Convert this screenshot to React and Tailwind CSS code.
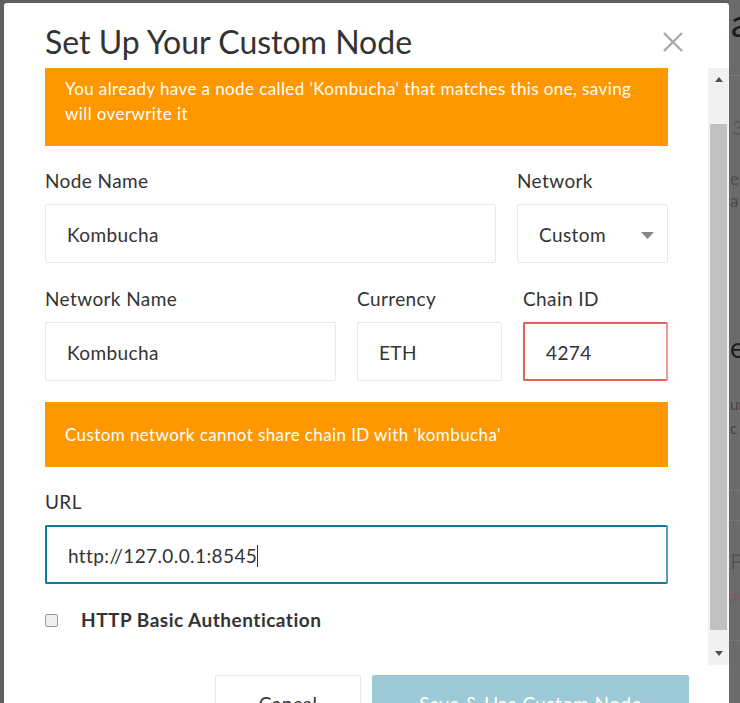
import React from "react";

function Field({ label, value, className = "", inputClass = "border border-[#e5e8ec]" }) {
  return (
    <div className={className}>
      <div className="text-[19px] leading-[27px] tracking-[0.4px] text-[#333]">{label}</div>
      <div className={`mt-[10px] flex h-[59px] items-center rounded-[2px] pl-[21px] pt-[3px] text-[19px] tracking-[0.4px] text-[#333] ${inputClass}`}>
        {value}
      </div>
    </div>
  );
}

function Alert({ children, className = "" }) {
  return (
    <div className={`w-full bg-[#ff9800] px-[20px] text-[17px] leading-[25px] tracking-[0.4px] text-white ${className}`}>
      {children}
    </div>
  );
}

function Scrollbar() {
  return (
    <div className="flex w-[21px] shrink-0 flex-col bg-[#f1f1f1]">
      <div className="flex h-[17px] items-end justify-center pb-[3px]">
        <svg width="8" height="5" viewBox="0 0 8 5">
          <path d="M0 5 L4 0 L8 5 Z" fill="#505050" />
        </svg>
      </div>
      <div className="h-[39px]" />
      <div className="mx-[2px] h-[506px] bg-[#c1c1c1]" />
      <div className="flex-1" />
      <div className="flex h-[17px] items-start justify-center pt-[3px]">
        <svg width="8" height="5" viewBox="0 0 8 5">
          <path d="M0 0 L4 5 L8 0 Z" fill="#505050" />
        </svg>
      </div>
    </div>
  );
}

function BackdropStrip() {
  return (
    <div className="flex w-[11px] shrink-0 flex-col overflow-hidden bg-[#6b6b6b] whitespace-nowrap">
      <div className="mt-[6px] pl-[2px] text-[38px] leading-[32px] text-[#1a1a1a]">a</div>
      <div className="mt-[37px] border-t border-[#777]" />
      <div className="mt-[40px] pl-[3px] text-[20px] leading-[22px] text-[#5a5a5a]">3</div>
      <div className="mt-[30px] pl-[1px] text-[17px] leading-[22px] text-[#4d4d4d]">e</div>
      <div className="pl-[1px] text-[17px] leading-[22px] text-[#4d4d4d]">a</div>
      <div className="mt-[120px] pl-[1px] text-[28px] leading-[30px] text-[#1e1e1e]">e</div>
      <div className="mt-[30px] pl-[1px] text-[15px] leading-[24px] text-[#3f4450]">un</div>
      <div className="pl-[1px] text-[15px] leading-[24px] text-[#3f4450]">c</div>
      <div className="mt-[50px] border-t border-[#777]" />
      <div className="mt-[29px] border-t border-[#777]" />
      <div className="mt-[28px] pl-[1px] text-[22px] leading-[24px] text-[#555]">P</div>
      <div className="mt-[12px] pl-[1px] text-[15px] leading-[22px] text-[#7a5a5a]">av</div>
      <div className="mt-[33px] border-t border-[#777]" />
    </div>
  );
}

export default function App() {
  return (
    <div className="flex h-[703px] w-[740px] overflow-hidden bg-[#5f5f5f] font-[Lato,sans-serif]">
      <div className="w-[4px] shrink-0" />
      <div className="mt-[3px] flex w-[725px] shrink-0 flex-col rounded-t-[3px] bg-white">
        <div className="flex h-[65px] shrink-0 items-start justify-between pl-[41px] pr-[46px] pt-[20px]">
          <h1 className="text-[32px] leading-[38px] text-[#333]">Set Up Your Custom Node</h1>
          <svg className="mt-[9px]" width="20" height="20" viewBox="0 0 20 20">
            <path d="M1 1 L19 19 M19 1 L1 19" stroke="#aaa" strokeWidth="2.4" />
          </svg>
        </div>

        <div className="flex h-[597px] shrink-0">
          <div className="ml-[41px] w-[623px] shrink-0 overflow-hidden">
            <Alert className="pt-[8px] pb-[20px]">
              You already have a node called 'Kombucha' that matches this one, saving will overwrite it
            </Alert>

            <div className="mt-[21px] flex gap-[21px]">
              <Field className="w-[451px]" label="Node Name" value="Kombucha" />
              <div className="w-[151px]">
                <div className="text-[19px] leading-[27px] tracking-[0.4px] text-[#333]">Network</div>
                <div className="mt-[10px] flex h-[59px] items-center justify-between rounded-[2px] border border-[#e5e8ec] pl-[21px] pr-[13px] pt-[3px] text-[19px] tracking-[0.4px] text-[#333]">
                  <span>Custom</span>
                  <svg width="13" height="7" viewBox="0 0 13 7">
                    <path d="M0 0 L13 0 L6.5 7 Z" fill="#888" />
                  </svg>
                </div>
              </div>
            </div>

            <div className="mt-[22px] flex gap-[21px]">
              <Field className="w-[291px]" label="Network Name" value="Kombucha" />
              <Field className="w-[145px]" label="Currency" value="ETH" />
              <Field
                className="w-[145px]"
                label="Chain ID"
                value="4274"
                inputClass="border-2 border-[#e16552] border-r-[#ee9c8f]"
              />
            </div>

            <Alert className="mt-[21px] py-[20px]">Custom network cannot share chain ID with 'kombucha'</Alert>

            <Field
              className="mt-[21px]"
              label="URL"
              value={
                <span className="flex items-center">
                  http://127.0.0.1:8545
                  <span className="inline-block h-[22px] w-[1px] bg-[#333]" />
                </span>
              }
              inputClass="border-2 border-[#0e7c9b] border-r-[#4aa3bb]"
            />

            <div className="mt-[24px] flex h-[24px] items-center">
              <div className="h-[13px] w-[13px] rounded-[2px] border border-[#9a9a9a] bg-[#efefef]" />
              <span className="ml-[23px] text-[19px] font-bold leading-[24px] tracking-[0.5px] text-[#333]">
                HTTP Basic Authentication
              </span>
            </div>
          </div>
          <div className="flex-1" />
          <Scrollbar />
        </div>

        <div className="flex justify-end gap-[11px] pr-[40px] pt-[10px]">
          <button className="flex h-[58px] w-[146px] items-center justify-center rounded-[2px] border border-[#e5e8ec] bg-white text-[19px] tracking-[0.4px] text-[#333]">
            Cancel
          </button>
          <button className="flex h-[58px] w-[317px] items-center justify-center rounded-[2px] bg-[#9dcad6] text-[19px] tracking-[0.4px] text-white">
            Save &amp; Use Custom Node
          </button>
        </div>
      </div>
      <BackdropStrip />
    </div>
  );
}
